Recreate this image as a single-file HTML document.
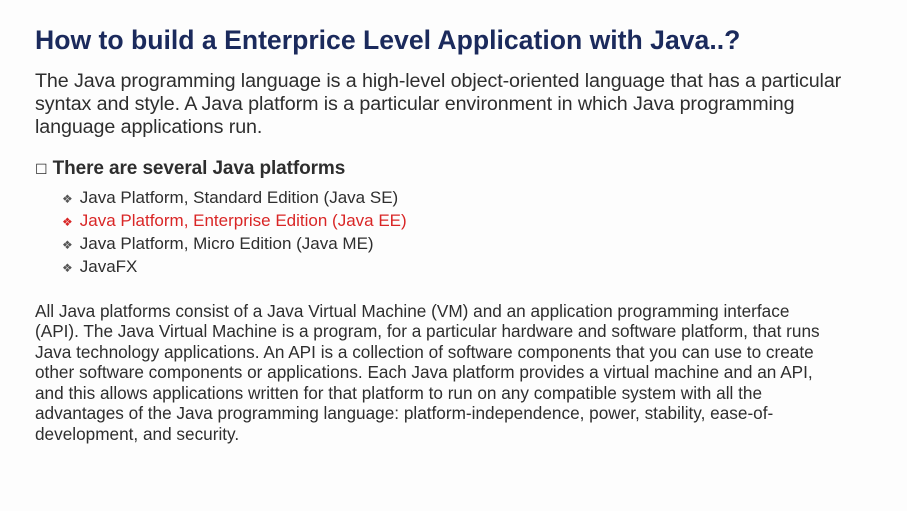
<!DOCTYPE html>
<html><head><style>
body{margin:0;width:907px;height:511px;background:#fdfdfd;font-family:"Liberation Sans",sans-serif;color:#2e2e2e;overflow:hidden;position:relative}
.l{position:absolute;white-space:nowrap;left:35px}
h1{position:absolute;left:35px;top:25px;margin:0;font-size:26.6px;color:#1b2a5c;white-space:nowrap}
.p{font-size:19.7px;letter-spacing:-0.1px}
.b{font-size:17px;left:62px}
.b span{font-size:12px;color:#555;margin-right:7px}
.r{color:#d92626}
.r span{color:#d92626}
.q{font-size:17.2px}
</style></head><body>
<h1>How to build a Enterprice Level Application with Java..?</h1>
<div class="l p" style="top:70px">The Java programming language is a high-level object-oriented language that has a particular</div>
<div class="l p" style="top:93px">syntax and style. A Java platform is a particular environment in which Java programming</div>
<div class="l p" style="top:116px">language applications run.</div>
<div class="l p" style="top:158px;font-weight:bold;font-size:19px"><span style="font-weight:normal;font-size:14px">☐</span> There are several Java platforms</div>
<div class="l b" style="top:188px"><span>❖</span>Java Platform, Standard Edition (Java SE)</div>
<div class="l b r" style="top:211px"><span>❖</span>Java Platform, Enterprise Edition (Java EE)</div>
<div class="l b" style="top:234px"><span>❖</span>Java Platform, Micro Edition (Java ME)</div>
<div class="l b" style="top:257px"><span>❖</span>JavaFX</div>
<div class="l q" style="top:301px">All Java platforms consist of a Java Virtual Machine (VM) and an application programming interface</div>
<div class="l q" style="top:321px">(API). The Java Virtual Machine is a program, for a particular hardware and software platform, that runs</div>
<div class="l q" style="top:342px">Java technology applications. An API is a collection of software components that you can use to create</div>
<div class="l q" style="top:362px">other software components or applications. Each Java platform provides a virtual machine and an API,</div>
<div class="l q" style="top:383px">and this allows applications written for that platform to run on any compatible system with all the</div>
<div class="l q" style="top:403px">advantages of the Java programming language: platform-independence, power, stability, ease-of-</div>
<div class="l q" style="top:424px">development, and security.</div>
</body></html>
